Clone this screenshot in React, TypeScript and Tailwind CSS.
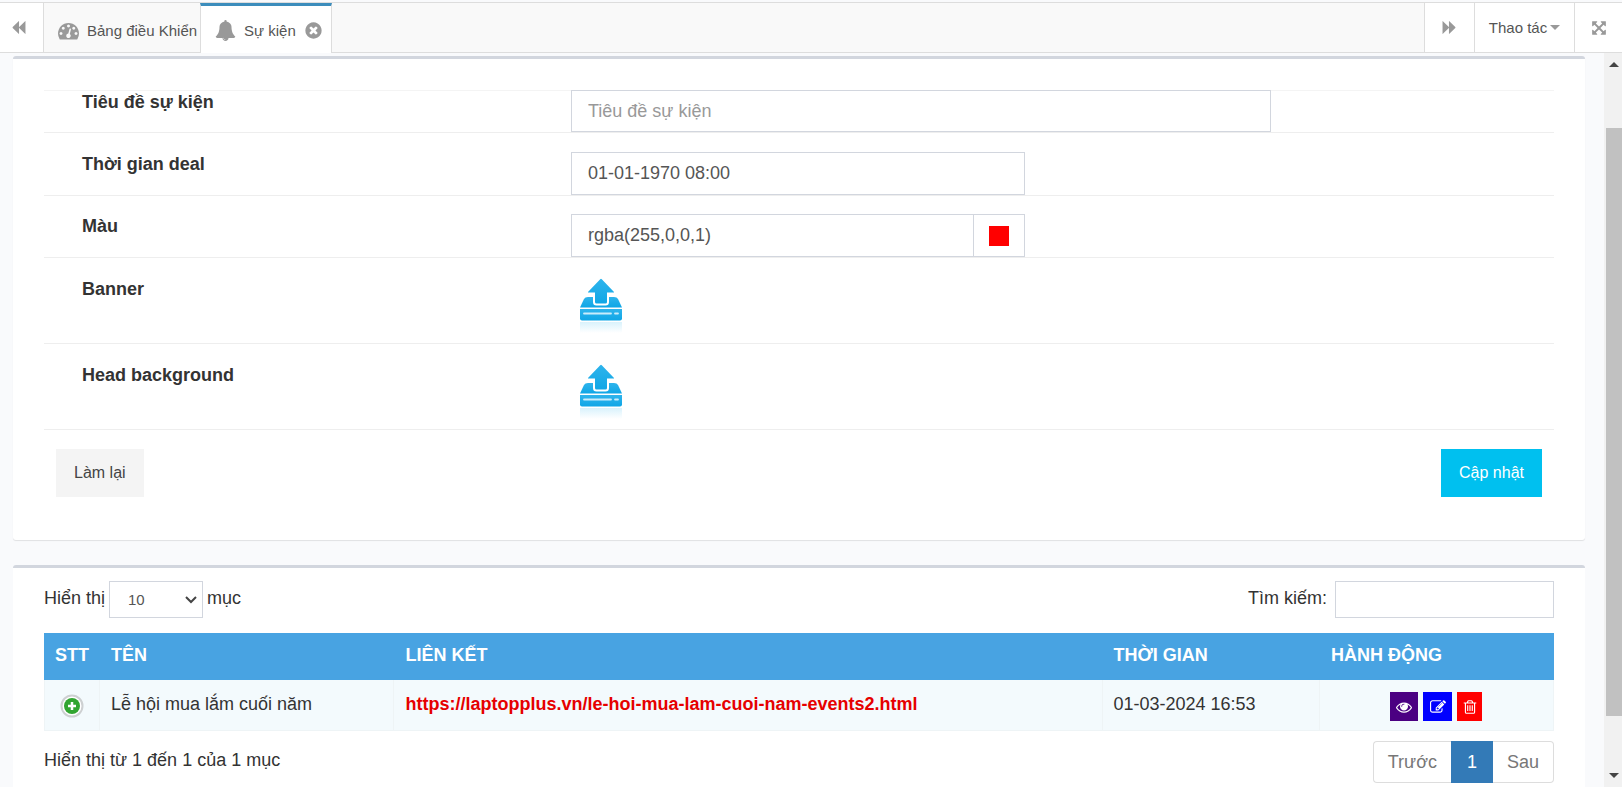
import type { ReactNode } from "react";

const icons = {
  backward:
    "M1683 141q19-19 32-13t13 32v1472q0 26-13 32t-32-13l-710-710q-9-9-13-19v710q0 26-13 32t-32-13l-710-710q-19-19-19-45t19-45l710-710q19-19 32-13t13 32v710q4-10 13-19z",
  gauge:
    "M384 1152q0-53-37.5-90.5t-90.5-37.5-90.5 37.5-37.5 90.5 37.5 90.5 90.5 37.5 90.5-37.5 37.5-90.5zm192-448q0-53-37.5-90.5t-90.5-37.5-90.5 37.5-37.5 90.5 37.5 90.5 90.5 37.5 90.5-37.5 37.5-90.5zm428 481l101-382q6-26-7.5-48.5t-38.5-29.5-48 6.5-30 39.5l-101 382q-60 5-107 43.5t-63 98.5q-20 77 20 146t117 89 146-20 89-117q16-60-6-117t-72-91zm660-33q0-53-37.5-90.5t-90.5-37.5-90.5 37.5-37.5 90.5 37.5 90.5 90.5 37.5 90.5-37.5 37.5-90.5zm-640-640q0-53-37.5-90.5t-90.5-37.5-90.5 37.5-37.5 90.5 37.5 90.5 90.5 37.5 90.5-37.5 37.5-90.5zm448 192q0-53-37.5-90.5t-90.5-37.5-90.5 37.5-37.5 90.5 37.5 90.5 90.5 37.5 90.5-37.5 37.5-90.5zm320 448q0 261-141 483-19 29-54 29h-1402q-35 0-54-29-141-221-141-483 0-182 71-348t191-286 286-191 348-71 348 71 286 191 191 286 71 348z",
  bell: "M912 1696q0-16-16-16-59 0-101.5-42.5t-42.5-101.5q0-16-16-16t-16 16q0 73 51.5 124.5t124.5 51.5q16 0 16-16zm816-288q0 52-38 90t-90 38h-448q0 106-75 181t-181 75-181-75-75-181h-448q-52 0-90-38t-38-90q50-42 91-88t85-119.5 74.5-158.5 50-206 19.5-260q0-152 117-282.5t307-158.5q-8-19-8-39 0-40 28-68t68-28 68 28 28 68q0 20-8 39 190 28 307 158.5t117 282.5q0 139 19.5 260t50 206 74.5 158.5 85 119.5 91 88z",
  close:
    "M1277 1122q0-26-19-45l-181-181 181-181q19-19 19-45 0-27-19-46l-90-90q-19-19-46-19-26 0-45 19l-181 181-181-181q-19-19-45-19-27 0-46 19l-90 90q-19 19-19 46 0 26 19 45l181 181-181 181q-19 19-19 45 0 27 19 46l90 90q19 19 46 19 26 0 45-19l181-181 181 181q19 19 45 19 27 0 46-19l90-90q19-19 19-46zm387-226q0 209-103 385.5t-279.5 279.5-385.5 103-385.5-103-279.5-279.5-103-385.5 103-385.5 279.5-279.5 385.5-103 385.5 103 279.5 279.5 103 385.5z",
  expand:
    "M1411 541l-355 355 355 355 144-144q29-31 70-14 39 17 39 59v448q0 26-19 45t-45 19h-448q-42 0-59-40-17-39 14-69l144-144-355-355-355 355 144 144q31 30 14 69-17 40-59 40h-448q-26 0-45-19t-19-45v-448q0-42 40-59 39-17 69 14l144 144 355-355-355-355-144 144q-19 19-45 19-12 0-24-5-40-17-40-59v-448q0-26 19-45t45-19h448q42 0 59 40 17 39-14 69l-144 144 355 355 355-355-144-144q-31-30-14-69 17-40 59-40h448q26 0 45 19t19 45v448q0 42-39 59-13 5-25 5-26 0-45-19z",
  eye: "M1664 960q-152-236-381-353 61 104 61 225 0 185-131.5 316.5t-316.5 131.5-316.5-131.5-131.5-316.5q0-121 61-225-229 117-381 353 133 205 333.5 326.5t434.5 121.5 434.5-121.5 333.5-326.5zm-720-384q0-20-14-34t-34-14q-125 0-214.5 89.5t-89.5 214.5q0 20 14 34t34 14 34-14 14-34q0-86 61-147t147-61q20 0 34-14t14-34zm848 384q0 34-20 69-140 230-376.5 368.5t-499.5 138.5-499.5-139-376.5-368q-20-35-20-69t20-69q140-229 376.5-368t499.5-139 499.5 139 376.5 368q20 35 20 69z",
  edit: "M888 1184l116-116-152-152-116 116v56h96v96h56zm440-720q-16-16-33 1l-350 350q-17 17-1 33t33-1l350-350q17-17 1-33zm80 594v190q0 119-84.5 203.5t-203.5 84.5h-832q-119 0-203.5-84.5t-84.5-203.5v-832q0-119 84.5-203.5t203.5-84.5h832q63 0 117 25 15 7 18 23 3 17-9 29l-49 49q-14 14-32 8-23-6-45-6h-832q-66 0-113 47t-47 113v832q0 66 47 113t113 47h832q66 0 113-47t47-113v-126q0-13 9-22l64-64q15-15 35-7t20 29zm-96-738l288 288-672 672h-288v-288zm444 132l-92 92-288-288 92-92q28-28 68-28t68 28l152 152q28 28 28 68t-28 68z",
  trash:
    "M704 736v576q0 14-9 23t-23 9h-64q-14 0-23-9t-9-23v-576q0-14 9-23t23-9h64q14 0 23 9t9 23zm256 0v576q0 14-9 23t-23 9h-64q-14 0-23-9t-9-23v-576q0-14 9-23t23-9h64q14 0 23 9t9 23zm256 0v576q0 14-9 23t-23 9h-64q-14 0-23-9t-9-23v-576q0-14 9-23t23-9h64q14 0 23 9t9 23zm128 724v-948h-896v948q0 22 7 40.5t14.5 27 10.5 8.5h832q3 0 10.5-8.5t14.5-27 7-40.5zm-672-1076h448l-48-117q-7-9-17-11h-317q-10 2-17 11zm928 32v64q0 14-9 23t-23 9h-96v948q0 83-47 143.5t-113 60.5h-832q-66 0-113-58.5t-47-141.5v-952h-96q-14 0-23-9t-9-23v-64q0-14 9-23t23-9h309l70-167q15-37 54-63t79-26h320q40 0 79 26t54 63l70 167h309q14 0 23 9t9 23z",
};

function Icon({ name, className }: { name: keyof typeof icons; className: string }) {
  return (
    <svg viewBox="0 0 1792 1792" fill="currentColor" aria-hidden="true" className={`shrink-0 overflow-visible ${className}`}>
      <path d={icons[name]} />
    </svg>
  );
}

function UploadIcon({ id }: { id: string }) {
  return (
    <svg viewBox="0 0 60 60" className="w-[60px] h-[60px]" aria-hidden="true">
      <defs>
        <linearGradient id={id} x1="0" y1="0" x2="0" y2="1">
          <stop offset="0" stopColor="#2fb4ec" />
          <stop offset="1" stopColor="#0fa6e6" />
        </linearGradient>
        <linearGradient id={`${id}-fade`} x1="0" y1="0" x2="0" y2="1">
          <stop offset="0" stopColor="#d9f2fc" />
          <stop offset="1" stopColor="#ffffff" />
        </linearGradient>
      </defs>
      <path d="M17 20h26q3 0 4 2l4 8.500H9l4-8.500q1-2 4-2z" fill={`url(#${id})`} />
      <path d="M28.500 1.500q1.500-1.500 3 0l12 12.500q1.500 2.500-1 2.500h-5.500v8.500q0 2.500-2.500 2.500h-9q-2.500 0-2.500-2.500v-8.500H17.500q-2.500 0-1-2.500z" fill={`url(#${id})`} stroke="#fff" strokeWidth="2" />
      <path d="M9 32h42v9.500q0 2-2 2H11q-2 0-2-2z" fill={`url(#${id})`} />
      <path d="M13 36.500h27M44 36.500h3" stroke="#c9ecfb" strokeWidth="1.800" strokeLinecap="round" />
      <path d="M9 45h42v11H9z" fill={`url(#${id}-fade)`} />
    </svg>
  );
}

function PlusIcon() {
  return (
    <svg viewBox="0 0 24 24" className="w-6 h-6" aria-hidden="true">
      <circle cx="12" cy="12" r="10.500" fill="#fff" stroke="#cdd0d2" strokeWidth="2" />
      <circle cx="12" cy="12" r="8" fill="#31a531" />
      <path d="M12 8v8M8 12h8" stroke="#fff" strokeWidth="2.500" />
    </svg>
  );
}

function FormRow({ label, htmlFor, className, children }: { label: string; htmlFor: string; className: string; children: ReactNode }) {
  return (
    <div className={`flex border-b border-[#eeeeee] ${className}`}>
      <label htmlFor={htmlFor} className="w-[34.9%] shrink-0 pl-[38px] font-bold leading-6 text-[#333]">
        {label}
      </label>
      <div className="flex-1">{children}</div>
    </div>
  );
}

const field = "block w-full border border-[#d2d6de] bg-white px-4 text-[#555] placeholder:text-[#999] outline-none";

const events = [
  {
    name: "Lễ hội mua lắm cuối năm",
    link: "https://laptopplus.vn/le-hoi-mua-lam-cuoi-nam-events2.html",
    time: "01-03-2024 16:53",
  },
];

function TopBar() {
  return (
    <header className="flex h-[51px] shrink-0 border-y border-[#dddddd] bg-[#f9f9f9] text-[15px] text-[#555]">
      <button type="button" aria-label="Trước đó" className="w-11 shrink-0 border-r border-[#dddddd] bg-white pl-[11px] text-[#999]">
        <Icon name="backward" className="size-[15px]" />
      </button>
      <nav className="flex flex-1">
        <a href="#dashboard" className="flex w-[156px] items-center gap-2 overflow-hidden whitespace-nowrap pl-[14px] pt-[6px]">
          <Icon name="gauge" className="size-[21px] text-[#999]" />
          <span>Bảng điều Khiển</span>
        </a>
        {/* active tab covers the bottom border of the bar */}
        <div className="-mb-px flex w-[132px] items-center border-x border-t-3 border-x-[#dddddd] border-t-[#3c8dbc] bg-white pl-[14px] pt-[2px]">
          <a href="#events" className="flex items-center gap-2 whitespace-nowrap">
            <Icon name="bell" className="size-[21px] text-[#999]" />
            <span>Sự kiện</span>
          </a>
          <button type="button" aria-label="Đóng" className="ml-2 text-[#999]">
            <Icon name="close" className="size-[19px]" />
          </button>
        </div>
      </nav>
      <button type="button" aria-label="Tiếp theo" className="flex w-[50px] items-center justify-center border-l border-[#dddddd] bg-white text-[#999]">
        <Icon name="backward" className="size-[15px] rotate-180" />
      </button>
      <button type="button" className="flex w-[100px] items-center justify-center gap-[3px] whitespace-nowrap border-l border-[#dddddd] bg-white">
        Thao tác
        <span className="border-x-[5px] border-t-[5px] border-x-transparent border-t-[#999]" />
      </button>
      <button type="button" aria-label="Toàn màn hình" className="flex w-12 items-center justify-center border-l border-[#dddddd] bg-white text-[#999]">
        <Icon name="expand" className="size-4" />
      </button>
    </header>
  );
}

function EventForm() {
  return (
    <form className="rounded-[3px] border-t-3 border-[#d2d6de] bg-white px-[31px] pb-[43px] pt-[31px] shadow-[0_1px_1px_rgba(0,0,0,0.1)]">
      <div className="border-t border-[#f4f4f4]">
        <FormRow label="Tiêu đề sự kiện" htmlFor="title" className="-mt-px">
          <input id="title" type="text" placeholder="Tiêu đề sự kiện" className={`${field} h-[42px] max-w-[700px]`} />
        </FormRow>
        <FormRow label="Thời gian deal" htmlFor="time" className="pt-[19px]">
          <input id="time" type="text" defaultValue="01-01-1970 08:00" className={`${field} h-[43px] max-w-[454px]`} />
        </FormRow>
        <FormRow label="Màu" htmlFor="color" className="pt-[18px]">
          <div className="flex max-w-[454px]">
            <input id="color" type="text" defaultValue="rgba(255,0,0,1)" className={`${field} h-[43px]`} />
            <button type="button" aria-label="Chọn màu" className="flex w-[51px] shrink-0 items-center justify-center border border-l-0 border-[#d2d6de]">
              <span className="size-5 bg-[#ff0000]" />
            </button>
          </div>
        </FormRow>
        <FormRow label="Banner" htmlFor="banner" className="pt-[19px]">
          <button id="banner" type="button" className="block pb-[6px]">
            <UploadIcon id="banner-icon" />
          </button>
        </FormRow>
        <FormRow label="Head background" htmlFor="head-bg" className="pt-[19px]">
          <button id="head-bg" type="button" className="block pb-[6px]">
            <UploadIcon id="head-icon" />
          </button>
        </FormRow>
      </div>
      <div className="flex justify-between px-3 pt-[19px] text-base">
        <button type="reset" className="h-12 bg-[#f4f4f4] px-[18px] text-[#444]">
          Làm lại
        </button>
        <button type="button" className="h-12 bg-[#00c0ef] px-[18px] text-white">
          Cập nhật
        </button>
      </div>
    </form>
  );
}

function EventTable() {
  const th = "px-[11px] pb-1 text-left font-bold";
  const td = "border-b border-r border-[#eef4f6] px-[11px] pt-3 align-top leading-6";

  return (
    <section className="mt-[25px] flex-1 rounded-t-[3px] border-t-3 border-[#d2d6de] bg-white px-[31px] pt-[13px]">
      <div className="flex justify-between">
        <label className="flex items-start gap-1 leading-[34px]">
          Hiển thị
          <span className="relative">
            <select className="block h-[37px] w-[94px] appearance-none border border-[#d2d6de] bg-white pl-[18px] text-[15px] text-[#555]">
              <option>10</option>
              <option>25</option>
              <option>50</option>
            </select>
            <svg viewBox="0 0 12 8" className="pointer-events-none absolute right-[6px] top-[15px] h-2 w-3" aria-hidden="true">
              <path d="M1 1l5 5 5-5" fill="none" stroke="#444" strokeWidth="2" />
            </svg>
          </span>
          mục
        </label>
        <label className="flex items-start gap-2 leading-[34px]">
          Tìm kiếm:
          <input type="search" className="h-[37px] w-[219px] border border-[#d2d6de] px-3 outline-none" />
        </label>
      </div>

      <table className="mt-[15px] w-full table-fixed border-separate border-spacing-0">
        <colgroup>
          <col className="w-14" />
          <col className="w-[19.5%]" />
          <col />
          <col className="w-[14.4%]" />
          <col className="w-[15.5%]" />
        </colgroup>
        <thead>
          <tr className="h-[47px] bg-[#48a3e2] text-white">
            <th className={th}>STT</th>
            <th className={th}>TÊN</th>
            <th className={th}>LIÊN KẾT</th>
            <th className={th}>THỜI GIAN</th>
            <th className={th}>HÀNH ĐỘNG</th>
          </tr>
        </thead>
        <tbody>
          {events.map((event) => (
            <tr key={event.link} className="h-[51px] bg-[#f3fafd]">
              <td className={`${td} border-l`}>
                <button type="button" aria-label="Xem thêm" className="mx-auto block pt-[2px]">
                  <PlusIcon />
                </button>
              </td>
              <td className={td}>{event.name}</td>
              <td className={td}>
                <a href={event.link} className="font-bold text-[#e60000]">
                  {event.link}
                </a>
              </td>
              <td className={td}>{event.time}</td>
              <td className={td}>
                <div className="flex justify-center gap-[5px] text-white">
                  <button type="button" aria-label="Xem" className="flex h-[29px] w-7 items-center justify-center bg-[#4b0082]">
                    <Icon name="eye" className="size-4" />
                  </button>
                  <button type="button" aria-label="Sửa" className="flex h-[29px] w-[29px] items-center justify-center bg-[#0000ff]">
                    <Icon name="edit" className="size-4" />
                  </button>
                  <button type="button" aria-label="Xóa" className="flex h-[29px] w-[25px] items-center justify-center bg-[#ff0000]">
                    <Icon name="trash" className="size-4" />
                  </button>
                </div>
              </td>
            </tr>
          ))}
        </tbody>
      </table>

      <div className="flex justify-between pt-[10px]">
        <p className="leading-[38px]">Hiển thị từ 1 đến 1 của 1 mục</p>
        <nav className="flex h-[42px] text-[#777]">
          <button type="button" className="rounded-l border border-r-0 border-[#dddddd] px-[14px]">
            Trước
          </button>
          <button type="button" className="w-[42px] bg-[#337ab7] text-white">
            1
          </button>
          <button type="button" className="rounded-r border border-l-0 border-[#dddddd] px-[14px]">
            Sau
          </button>
        </nav>
      </div>
    </section>
  );
}

function ScrollBar() {
  return (
    <div className="flex w-[18px] shrink-0 flex-col items-end bg-[#f1f1f1]">
      <div className="flex h-[75px] w-4 justify-center pt-[9px]">
        <span className="h-[5px] border-x-[5px] border-b-[5px] border-x-transparent border-b-[#444]" />
      </div>
      <div className="w-4 flex-1 bg-[#c1c1c1]" />
      <div className="flex h-[71px] w-4 items-end justify-center pb-[9px]">
        <span className="h-[5px] border-x-[5px] border-t-[5px] border-x-transparent border-t-[#444]" />
      </div>
    </div>
  );
}

export default function App() {
  return (
    <div className="h-screen overflow-hidden bg-white pb-[3px] font-['Liberation_Sans',Arial,sans-serif] text-lg text-[#333]">
      <div className="flex h-full flex-col bg-[#f9fafc] pt-[2px]">
        <TopBar />
        <div className="flex min-h-0 flex-1">
          <main className="flex min-w-0 flex-1 flex-col overflow-hidden pl-[13px] pr-[19px] pt-[3px]">
            <EventForm />
            <EventTable />
          </main>
          <ScrollBar />
        </div>
      </div>
    </div>
  );
}
